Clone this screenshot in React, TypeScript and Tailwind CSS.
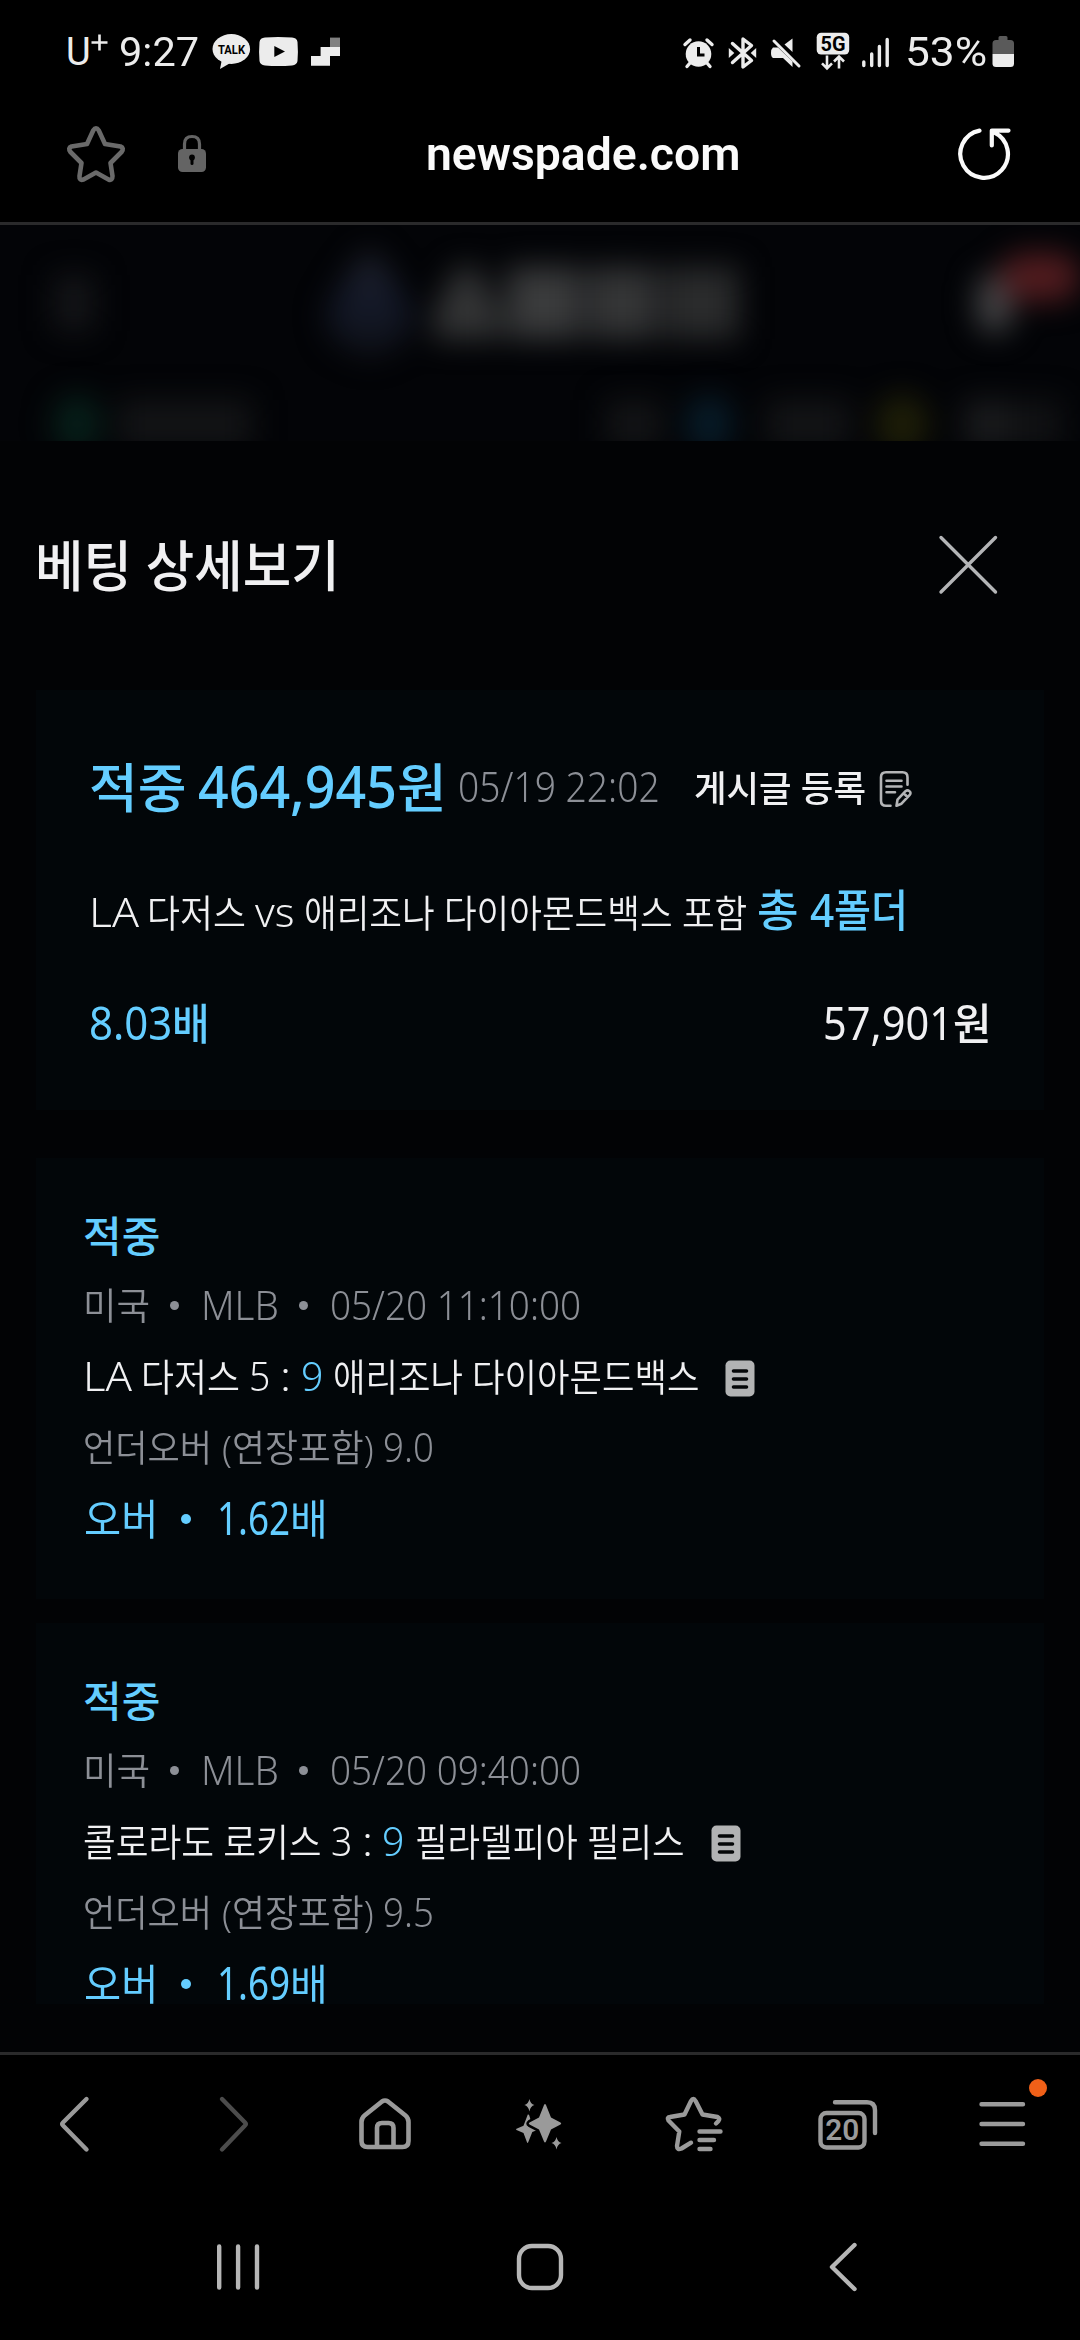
import { useLayoutEffect, useRef, useState } from "react";
import type { ReactNode } from "react";

/* Text that is condensed or widened to fill exactly the width of its box. */
function Fit({ className, children }: { className: string; children: ReactNode }) {
  const box = useRef<HTMLSpanElement>(null);
  const inner = useRef<HTMLSpanElement>(null);
  const [scale, setScale] = useState(1);
  useLayoutEffect(() => {
    if (box.current && inner.current) {
      setScale(box.current.clientWidth / inner.current.offsetWidth);
    }
  }, []);
  return (
    <span ref={box} className={`block shrink-0 whitespace-nowrap ${className}`}>
      <span ref={inner} className="inline-block origin-left" style={{ transform: `scaleX(${scale})` }}>
        {children}
      </span>
    </span>
  );
}

function StatusBar() {
  return (
    <div className="flex h-[104px] items-center pl-[66px] text-[#ececec] leading-[104px] font-['Roboto',sans-serif]">
      <Fit className="w-[25px] text-[38px]">U</Fit>
      <svg className="h-[17px] w-[17px] -mt-5" viewBox="0 0 17 17" stroke="currentColor" strokeWidth="2.6">
        <path d="M8.5 0.5V16.5M0.5 8.5H16.5" />
      </svg>
      <Fit className="ml-[11px] w-[80px] text-[41px]">9:27</Fit>
      <svg className="ml-[12px] h-[36px] w-[130px]" viewBox="211 35 130 36" fill="#ececec">
        <ellipse cx="231.3" cy="50" rx="18.8" ry="15" />
        <path d="M222 60l-2 10 12-7z" />
        <text x="231.5" y="55.2" textAnchor="middle" textLength="27" lengthAdjust="spacingAndGlyphs" fontSize="13.5" fontWeight="700" fontFamily="Roboto" fill="#000">
          TALK
        </text>
        <path d="M265 38.6Q278 37.4 292 38.6Q297 39 297.5 43Q298.3 52.5 297.5 62Q297 66 292 66.4Q278 67.6 265 66.4Q260 66 259.5 62Q258.7 52.5 259.5 43Q260 39 265 38.6Z" />
        <path d="M274.3 47l10.7 5.5-10.7 5.5z" fill="#000" />
        <rect x="330" y="38.6" width="10" height="9.4" fill="#808080" />
        <path d="M320.6 48H340v9h-10v9.7h-19V57h9.6z" />
      </svg>
      <svg className="ml-[341px] h-[40px] w-[210px]" viewBox="682 31 210 40" fill="#ececec">
        <circle cx="698.5" cy="53" r="12.8" />
        <path d="M685 43.5l5-4.5M712 43.5l-5-4.5M690 62l-3 3.5M707 62l3 3.5" stroke="#ececec" strokeWidth="3.4" strokeLinecap="round" />
        <path d="M698.5 46v8h6" fill="none" stroke="#000" strokeWidth="3" />
        <path d="M732.5 42.5L751.5 59.5L743 66V38L751.5 44.5L732.5 61.5" fill="none" stroke="#ececec" strokeWidth="3.4" strokeLinecap="round" strokeLinejoin="round" />
        <path d="M728.8 47l5.5 5-5.5 5zM756.2 47l-5.5 5 5.5 5z" />
        <path d="M792.5 37.5V51l-8-7.5zM773 46.5h5l14.5 14V66l-9.5-9h-10q-2-1-2-5t2-5.5z" />
        <path d="M774 40L799 65" stroke="#ececec" strokeWidth="3" strokeLinecap="round" />
        <rect x="816.7" y="31.8" width="32.5" height="21.7" rx="4.5" />
        <text x="833" y="49.9" textAnchor="middle" textLength="25" lengthAdjust="spacingAndGlyphs" fontSize="20.5" fontWeight="700" fontFamily="Roboto" fill="#000">
          5G
        </text>
        <path d="M827 54.5V67M822 62.3l5 5 5-5M839 67.5V56M834 60.5l5-5 5 5" fill="none" stroke="#ececec" strokeWidth="2.6" />
        <path d="M863.8 61v3.5M871.7 53v11.5M879.4 45.5v19M887.2 38.5v26" stroke="#ececec" strokeWidth="3.4" strokeLinecap="round" />
      </svg>
      <Fit className="ml-[13px] w-[82px] text-[41px]">53%</Fit>
      <svg className="ml-[5px] h-[32px] w-[22px]" viewBox="992 36 22 32">
        <path d="M998.5 37.5q0-1.5 1.5-1.5h6q1.5 0 1.5 1.5V40h3q3.5 0 3.5 3.5V54H992.5V43.5Q992.5 40 996 40h2.5z" fill="#5a5a5a" />
        <path d="M992.5 54H1014V63.5Q1014 67 1010.5 67H996Q992.5 67 992.5 63.5Z" fill="#ececec" />
      </svg>
    </div>
  );
}

function AddressBar() {
  return (
    <div className="flex h-[118px] items-center pb-[19px] pl-[66px]">
      <svg className="h-[58px] w-[60px]" viewBox="66 124 60 58" fill="none" stroke="#6a6a6a" strokeWidth="4.6" strokeLinejoin="round">
        <path d="M93.2 129.5Q96 125 98.8 129.5L105 143L120.5 145.5Q124.5 147 121.5 151L110.500 162L112.5 175Q112.5 180 108.5 178.5L96 171.5L83.5 178.5Q79 180 79.5 175L81.5 162L70.5 151Q67.5 147 71.5 145.5L87 143Z" />
      </svg>
      <svg className="ml-[51px] h-[40px] w-[30px]" viewBox="177 134 30 40">
        <path d="M184.5 150v-6q0-7.5 7.5-7.5t7.5 7.5v6" fill="none" stroke="#646464" strokeWidth="3.2" />
        <rect x="178" y="149" width="28" height="23" rx="4.5" fill="#646464" />
        <path d="M192 158.5v5" stroke="#000" strokeWidth="3" strokeLinecap="round" />
        <circle cx="192" cy="157.5" r="2.9" fill="#000" />
      </svg>
      <Fit className="ml-[219px] w-[314px] text-[46px] leading-[100px] font-semibold text-[#fafafa] font-['Roboto',sans-serif]">
        newspade.com
      </Fit>
      <svg className="ml-[217px] h-[56px] w-[56px]" viewBox="956 125 56 56" fill="none" stroke="#fafafa" strokeWidth="4.2" strokeLinecap="round">
        <path d="M978.5 129.6A23.8 23.8 0 1 0 993 131.3M990.8 144.5V129.6H1007.5" strokeLinejoin="round" />
      </svg>
    </div>
  );
}

/* The site header, dimmed and out of focus behind the sheet. */
function DimmedHeader() {
  return (
    <div className="h-[216px] overflow-hidden bg-[#030407]">
      <div className="flex h-[156px] items-center pl-[54px] blur-[15px]">
        <div className="h-[56px] w-[46px] bg-[#141518]" />
        <div className="ml-[230px] h-[110px] w-[104px] bg-linear-to-b from-[#23252e] via-[#131828] to-[#101218] [clip-path:polygon(50%_0%,75%_25%,100%_60%,88%_85%,50%_100%,12%_85%,0%_60%,25%_25%)]" />
        <div className="ml-[18px] flex gap-[6px]">
          <div className="h-[72px] w-[68px] bg-[#333435] [clip-path:polygon(35%_0%,65%_0%,100%_65%,100%_100%,0%_100%,0%_65%)]" />
          <div className="h-[72px] w-[74px] bg-[#3a3b3c]" />
          <div className="h-[72px] w-[70px] bg-[#343536]" />
          <div className="h-[72px] w-[76px] bg-[#2a2b2c]" />
        </div>
        <div className="ml-[238px] h-[60px] w-[40px] rounded-full bg-[#454648]" />
        <div className="-ml-[12px] -mt-[52px] h-[48px] w-[80px] shrink-0 rounded-full bg-[#521c1f]" />
      </div>
      <div className="flex h-[86px] items-center pl-[54px] blur-[15px]">
        <div className="h-[58px] w-[46px] rounded-full bg-[#07201a]" />
        <div className="ml-[18px] h-[48px] w-[134px] bg-[#131416]" />
        <div className="ml-[354px] h-[48px] w-[56px] bg-[#131416]" />
        <div className="ml-[24px] h-[58px] w-[46px] rounded-full bg-[#081c29]" />
        <div className="ml-[34px] h-[48px] w-[84px] bg-[#131416]" />
        <div className="ml-[26px] h-[58px] w-[52px] rounded-full bg-[#1f1f08]" />
        <div className="ml-[36px] h-[48px] w-[44px] bg-[#1a1b1d]" />
        <div className="h-[48px] w-[54px] bg-[#111214]" />
      </div>
    </div>
  );
}

function Summary() {
  return (
    <section className="mx-[36px] h-[420px] bg-[#020609] pt-[47px] pl-[53px]">
      <div className="flex h-[100px] items-center font-medium leading-[100px]">
        <div className="flex items-baseline text-[#64cdff]">
          <Fit className="w-[98px] text-[53px]">적중</Fit>
          <Fit className="ml-[11px] w-[199px] text-[58px]">464,945</Fit>
          <Fit className="w-[50px] text-[53px]">원</Fit>
        </div>
        <div className="ml-[11px] flex items-baseline">
          <Fit className="w-[202px] text-[42px] font-light text-[#8c8f96]">05/19 22:02</Fit>
          <Fit className="ml-[34px] w-[172px] text-[36px] text-[#f0f0f2]">게시글 등록</Fit>
        </div>
        <svg className="mt-[4px] ml-[13px] h-[38px] w-[34px]" viewBox="878 770 34 38" fill="none" stroke="#b4b5b7" strokeWidth="2.6" strokeLinecap="round" strokeLinejoin="round">
          <path d="M889.5 805.7h-4.5q-5 0-5-5v-23.5q0-5 5-5h16.5q5 0 5 5v7.5M885.5 780.8h15M885.5 786.5h15M885.5 792.2h8.5" />
          <path d="M895.5 805.7l1-6 8-8.5q2-1.5 4 0t0 4l-8 8.5zM903 793.5l3.5 3.5" />
        </svg>
      </div>
      <div className="mt-[22px] flex h-[100px] items-baseline text-[#f0f0f2] font-[350] leading-[100px]">
        <Fit className="w-[50px] text-[40px]">LA</Fit>
        <Fit className="ml-[8px] w-[99px] text-[38px]">다저스</Fit>
        <Fit className="ml-[9px] w-[40px] text-[40px]">vs</Fit>
        <Fit className="ml-[9px] w-[443px] text-[38px]">애리조나 다이아몬드백스 포함</Fit>
        <Fit className="ml-[10px] w-[41px] text-[44px] font-medium text-[#64cdff]">총</Fit>
        <Fit className="ml-[12px] w-[24px] text-[46px] font-medium text-[#64cdff]">4</Fit>
        <Fit className="w-[74px] text-[44px] font-medium text-[#64cdff]">폴더</Fit>
      </div>
      <div className="mt-[13px] flex h-[100px] items-baseline leading-[100px]">
        <Fit className="w-[83px] text-[46px] text-[#64cdff]">8.03</Fit>
        <Fit className="w-[38px] text-[43px] font-medium text-[#64cdff]">배</Fit>
        <Fit className="ml-[613px] w-[130px] text-[46px] text-[#f0f0f2]">57,901</Fit>
        <Fit className="w-[39px] text-[43px] font-medium text-[#f0f0f2]">원</Fit>
      </div>
    </section>
  );
}

function MemoIcon() {
  return (
    <svg className="h-[37px] w-[30px] shrink-0" viewBox="0 0 30 37">
      <rect x="0.5" y="0.5" width="29" height="36" rx="5" fill="#b2b3b4" />
      <path d="M8.5 11h13M8.5 19h13M8.5 27h13" stroke="#050708" strokeWidth="3.6" strokeLinecap="round" />
    </svg>
  );
}

function Bet({ time, teams, line, odds, height }: { time: string; teams: ReactNode; line: string; odds: string; height: string }) {
  return (
    <section className={`mx-[36px] shrink-0 bg-[#020609] pt-[42px] pl-[47px] leading-[71px] font-[350] ${height}`}>
      <div className="flex h-[69px] items-baseline">
        <Fit className="w-[77px] text-[42px] font-medium text-[#64cdff]">적중</Fit>
      </div>
      <div className="flex h-[71px] items-baseline text-[#8c8f96]">
        <Fit className="w-[67px] text-[37px]">미국</Fit>
        <span className="mt-[2px] ml-[20px] size-[9px] self-center rounded-full bg-[#8c8f96]" />
        <Fit className="ml-[22px] w-[78px] text-[41px]">MLB</Fit>
        <span className="mt-[2px] ml-[20px] size-[9px] self-center rounded-full bg-[#8c8f96]" />
        <Fit className="ml-[22px] w-[251px] text-[41px]">{time}</Fit>
      </div>
      <div className="flex h-[71px] items-baseline text-[#f0f0f2]">
        {teams}
        <span className="ml-[26px] flex self-center pt-[6px]">
          <MemoIcon />
        </span>
      </div>
      <div className="flex h-[71px] items-baseline text-[#8c8f96]">
        <Fit className="w-[129px] text-[37px]">언더오버</Fit>
        <Fit className="ml-[10px] w-[152px] text-[37px]">(연장포함)</Fit>
        <Fit className="ml-[9px] w-[51px] text-[41px]">{line}</Fit>
      </div>
      <div className="mt-[13px] flex h-[44px] items-baseline font-normal leading-[44px] text-[#64cdff]">
        <Fit className="ml-[1px] w-[74px] text-[42px]">오버</Fit>
        <span className="mt-[4px] ml-[23px] size-[10px] self-center rounded-full bg-[#64cdff]" />
        <Fit className="ml-[26px] w-[73px] text-[46px]">{odds}</Fit>
        <Fit className="w-[38px] text-[42px]">배</Fit>
      </div>
    </section>
  );
}

function BrowserNav() {
  return (
    <div className="relative flex h-[137px] items-center pl-[54px] text-[#9a9a9a]">
      <svg className="h-[60px] w-[40px]" viewBox="54 2094 40 60" fill="none" stroke="currentColor" strokeWidth="4.4" strokeLinecap="round" strokeLinejoin="round">
        <path d="M86.5 2099L63 2122.5Q61.5 2124 63 2125.5L86.5 2149.5" />
      </svg>
      <svg className="ml-[120px] h-[60px] w-[40px]" viewBox="214 2094 40 60" fill="none" stroke="#4c4c4c" strokeWidth="4.4" strokeLinecap="round" strokeLinejoin="round">
        <path d="M222 2099L245 2122.5Q246.5 2124 245 2125.5L222 2149.5" />
      </svg>
      <svg className="ml-[101px] h-[60px] w-[60px]" viewBox="355 2094 60 60" fill="none" stroke="currentColor" strokeWidth="4.6" strokeLinejoin="round">
        <path d="M361.5 2122q0-4 3-6.5L382 2101.5q3-2 6 0L405.5 2115.5q3 2.5 3 6.5V2141q0 6-6 6H367.5q-6 0-6-6zM377 2147V2128q0-5 5-5h6.5q5 0 5 5V2147" />
      </svg>
      <svg className="ml-[95px] h-[60px] w-[60px]" viewBox="510 2094 60 60" fill="currentColor">
        <path d="M529.4 2099q1 5 5 6-4 1-5 6.5-1-5.5-5-6.5 4-1 5-6z" />
        <path d="M527.8 2114.5q1-.5 1.5 1l2.5 8.5 5.5 4.5q1.5 1 0 1.5l-5 2-4 10q-.7 2-1.4 0l-3.4-9-7-3q-1-.7 0-1.3l7-3z" />
        <path d="M544 2105q1-2 2 0l5 12.5 9.5 5q1.5 1 0 2l-9.5 5-5 12q-1 2-2 0l-5-12-9.5-5q-1.5-1 0-2l9.5-5z" stroke="#000" strokeWidth="5" paintOrder="stroke" />
        <path d="M556.5 2137q1 5 5 6-4 1-5 6.5-1-5.5-5-6.5 4-1 5-6z" />
      </svg>
      <svg className="ml-[94px] h-[60px] w-[60px]" viewBox="663 2094 60 60" fill="none" stroke="currentColor" strokeWidth="4.4" strokeLinecap="round" strokeLinejoin="round">
        <path d="M690 2142.7L680.5 2148.5Q676 2150.5 676 2146L678.3 2131.5L667.5 2120.5Q665.5 2117.5 669 2117L683.5 2114.5L690 2101Q692.3 2097 694.6 2101L701.5 2114.5L716.5 2117Q719.5 2118.5 717.5 2121L715 2123.5M698.5 2131.5H719.5M698.5 2140H713M698.5 2149H709.5" />
      </svg>
      <svg className="ml-[92px] h-[60px] w-[64px]" viewBox="816 2094 64 60" fill="none" stroke="currentColor" strokeWidth="4.4" strokeLinecap="round">
        <rect x="820.5" y="2113" width="44" height="34.5" rx="6" />
        <path d="M835 2102.2H867q8 0 8 8V2133" />
        <text x="842.3" y="2140" textAnchor="middle" textLength="34" lengthAdjust="spacingAndGlyphs" fontSize="30" fontWeight="600" fontFamily="Roboto" fill="currentColor" stroke="none">
          20
        </text>
      </svg>
      <svg className="ml-[97px] h-[60px] w-[50px]" viewBox="977 2094 50 60" stroke="currentColor" strokeWidth="4.4" strokeLinecap="round">
        <path d="M981.5 2104.3H1023M981.5 2124H1023M981.5 2143.7H1023" />
      </svg>
      <span className="absolute top-[24px] left-[1029px] size-[18px] rounded-full bg-[#f06018]" />
    </div>
  );
}

function SystemNav() {
  return (
    <div className="flex h-[148px] items-center pt-px pl-[215px] text-[#b6b6b6]">
      <svg className="h-[50px] w-[46px]" viewBox="215 2242 46 50" stroke="currentColor" strokeWidth="4.4" strokeLinecap="round">
        <path d="M219.2 2246.5V2287.5M238.1 2246.5V2287.5M257 2246.5V2287.5" />
      </svg>
      <svg className="ml-[254px] h-[50px] w-[50px]" viewBox="515 2242 50 50" fill="none" stroke="currentColor" strokeWidth="4.4">
        <rect x="519" y="2246" width="42" height="42" rx="13" />
      </svg>
      <svg className="ml-[262px] h-[52px] w-[34px]" viewBox="827 2241 34 52" fill="none" stroke="currentColor" strokeWidth="4.4" strokeLinecap="round" strokeLinejoin="round">
        <path d="M854.5 2245L832 2267L854.5 2289" />
      </svg>
    </div>
  );
}

export default function App() {
  return (
    <div className="flex h-[2340px] w-[1080px] flex-col overflow-hidden bg-black font-['Noto_Sans','Noto_Sans_CJK_KR',sans-serif]">
      <StatusBar />
      <AddressBar />
      <div className="h-[3px] bg-[#2a2a2b]" />
      <DimmedHeader />
      <main className="flex h-[1611px] flex-col bg-[#020305]">
        <header className="flex h-[249px] items-center justify-between pr-[81px] pb-px pl-[35px]">
          <h1 className="text-[55px] leading-[244px] font-medium text-[#f0f0f2]">
            <Fit className="w-[305px]">베팅 상세보기</Fit>
          </h1>
          <svg className="h-[62px] w-[62px]" viewBox="0 0 62 62" stroke="#b4b5b7" strokeWidth="3.4" strokeLinecap="round">
            <path d="M4 3.5L58.5 58M58.5 3.5L4 58" />
          </svg>
        </header>
        <Summary />
        <div className="mt-[48px] flex flex-col gap-[24px]">
          <Bet
            height="h-[441px]"
            time="05/20 11:10:00"
            line="9.0"
            odds="1.62"
            teams={
              <>
                <Fit className="w-[49px] text-[40px]">LA</Fit>
                <Fit className="ml-[9px] w-[99px] text-[38px]">다저스</Fit>
                <Fit className="ml-[9px] w-[21px] text-[41px]">5</Fit>
                <Fit className="ml-[10px] w-[11px] text-[41px]">:</Fit>
                <Fit className="ml-[10px] w-[22px] text-[41px] text-[#64cdff]">9</Fit>
                <Fit className="ml-[10px] w-[366px] text-[38px]">애리조나 다이아몬드백스</Fit>
              </>
            }
          />
          <Bet
            height="h-[381px]"
            time="05/20 09:40:00"
            line="9.5"
            odds="1.69"
            teams={
              <>
                <Fit className="w-[239px] text-[38px]">콜로라도 로키스</Fit>
                <Fit className="ml-[9px] w-[21px] text-[41px]">3</Fit>
                <Fit className="ml-[10px] w-[11px] text-[41px]">:</Fit>
                <Fit className="ml-[9px] w-[22px] text-[41px] text-[#64cdff]">9</Fit>
                <Fit className="ml-[11px] w-[270px] text-[38px]">필라델피아 필리스</Fit>
              </>
            }
          />
        </div>
      </main>
      <div className="h-[3px] bg-[#2a2a2b]" />
      <BrowserNav />
      <SystemNav />
    </div>
  );
}
